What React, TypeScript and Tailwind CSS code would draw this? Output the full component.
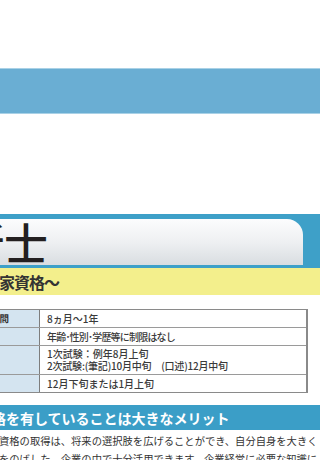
import React from "react";

const font = { fontFamily: '"Noto Sans CJK JP", "Noto Sans", sans-serif' };

function Row({
  label,
  h,
  children,
  first,
}: {
  label?: string;
  h: string;
  children: React.ReactNode;
  first?: boolean;
}) {
  return (
    <div className={`flex ${h} ${first ? "" : "border-t border-[#9a9a9a]"}`}>
      <div className="w-[40px] shrink-0 bg-[#d4e4f0] border-r border-[#7d7d7d] flex items-center overflow-hidden whitespace-nowrap">
        {label ? (
          <span className="ml-[-10px] text-[9.5px] font-bold text-[#333] leading-none">{label}</span>
        ) : null}
      </div>
      <div className="flex-1 flex flex-col justify-center pl-[7px] text-[10px] font-medium leading-[12px] text-[#3a3a3a] whitespace-nowrap">
        {children}
      </div>
    </div>
  );
}

export default function App() {
  return (
    <div className="w-[320px] h-[460px] overflow-hidden bg-white" style={font}>
      <div className="h-[68px]" />
      <div className="h-[46px] bg-[#6aaed3] border-y border-[#a9d1e6]" />
      <div className="h-[100px]" />
      <div className="bg-[#3ea0c8] pt-[5px] pb-[3px] pr-[17px]">
        <div className="h-[46px] rounded-tr-[16px] bg-gradient-to-b from-[#fcfcfd] via-[#eef0f2] to-[#d9dde1] flex items-center overflow-hidden whitespace-nowrap">
          <span className="ml-[-40px] text-[44px] font-medium leading-none text-[#231f20]">断士</span>
        </div>
      </div>
      <div className="h-[27px] bg-[#f3ef8c] flex items-center overflow-hidden whitespace-nowrap">
        <span className="ml-[-31px] text-[16px] font-bold leading-none tracking-[-1px] text-[#333]">
          ～国家資格～
        </span>
      </div>
      <div className="h-[14px]" />
      <div className="w-[308px] border-y border-r-2 border-[#8a8a8a] overflow-hidden">
        <Row label="期間" h="h-[17px]" first>
          <span>8ヵ月～1年</span>
        </Row>
        <Row h="h-[18px]">
          <span className="tracking-[-0.8px]">年齢･性別･学歴等に制限はなし</span>
        </Row>
        <Row h="h-[29px]">
          <span>1次試験：例年8月上旬</span>
          <span className="tracking-[-0.2px]">2次試験:(筆記)10月中旬　(口述)12月中旬</span>
        </Row>
        <Row h="h-[18px]">
          <span>12月下旬または1月上旬</span>
        </Row>
      </div>
      <div className="h-[12px]" />
      <div className="h-[25px] bg-[#3b9ec7] flex items-center overflow-hidden whitespace-nowrap">
        <span className="ml-[-22px] text-[14px] font-bold leading-none text-white">
          資格を有していることは大きなメリット
        </span>
      </div>
      <div className="pt-[2px] text-[10.3px] leading-[18px] text-[#333] whitespace-nowrap overflow-hidden">
        <div className="ml-[-1px]">資格の取得は、将来の選択肢を広げることができ、自分自身を大きく</div>
        <div className="ml-[-1px]">をのばした、企業の中で十分活用できます。企業経営に必要な知識に</div>
      </div>
    </div>
  );
}
